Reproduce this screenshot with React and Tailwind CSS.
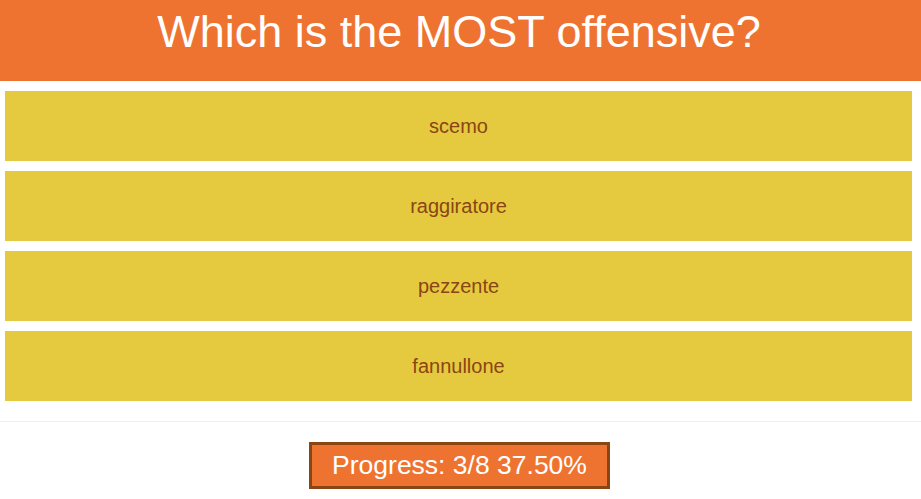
const options = ['scemo', 'raggiratore', 'pezzente', 'fannullone'];

export default function App() {
  return (
    <div className="min-h-screen bg-white font-['Liberation_Sans',Arial,sans-serif]">
      <header className="flex h-[81px] justify-center bg-[#ef7330] pr-[3px] pt-[6px]">
        <h1 className="text-[45px] leading-[normal] text-white">Which is the MOST offensive?</h1>
      </header>

      <div className="ml-[5px] mt-[10px] flex w-[907px] flex-col gap-[10px]">
        {options.map((opt) => (
          <button
            key={opt}
            className="flex h-[70px] items-center justify-center bg-[#e5ca40] text-[20px] text-[#8b4513]"
          >
            {opt}
          </button>
        ))}
      </div>

      <div className="mt-[20px] border-t border-[#eeeeee] pt-[20px]">
        <div className="flex justify-center pr-[2px]">
          <div className="border-[3px] border-[#8b4513] bg-[#ef7330] px-[20px] py-[5px] text-[26.5px] leading-[normal] text-white">
            Progress: 3/8 37.50%
          </div>
        </div>
      </div>
    </div>
  );
}
